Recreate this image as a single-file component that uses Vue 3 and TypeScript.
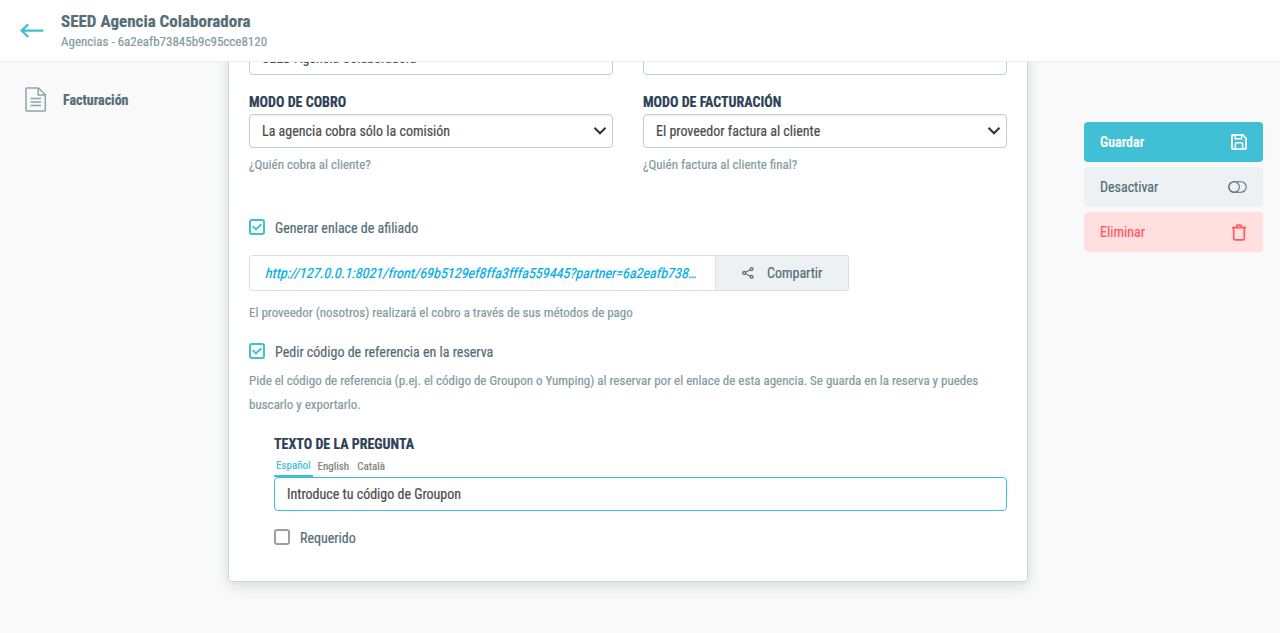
<script setup lang="ts">
import { ref } from 'vue'

interface SelectField {
  label: string
  value: string
  hint: string
}

const agencyName = 'SEED Agencia Colaboradora'
const selects: SelectField[] = [
  { label: 'MODO DE COBRO', value: 'La agencia cobra sólo la comisión', hint: '¿Quién cobra al cliente?' },
  { label: 'MODO DE FACTURACIÓN', value: 'El proveedor factura al cliente', hint: '¿Quién factura al cliente final?' },
]
const languages = ['Español', 'English', 'Català']
const activeLanguage = ref('Español')
const affiliate = ref(true)
const askCode = ref(true)
const required = ref(false)
</script>

<template>
  <div class="page">
    <header class="header">
      <svg class="back" width="26" height="18" viewBox="0 0 26 18">
        <path d="M24.5 8.6H2.4M9.2 2.4 2.6 8.6l6.6 6.4" fill="none" stroke="#41bfd4" stroke-width="2.2" />
      </svg>
      <div class="heading">
        <h1><span>{{ agencyName }}</span></h1>
        <p><span>Agencias - 6a2eafb73845b9c95cce8120</span></p>
      </div>
    </header>

    <main class="body">
      <nav class="sidebar">
        <a class="nav-item">
          <svg width="22" height="26" viewBox="0 0 22 26" fill="none" stroke="#8ba6aa" stroke-width="1.5">
            <path d="M1.8 1H13.5L20.3 7.8V23.2Q20.3 24 19.5 24H1.8Q1 24 1 23.2V1.8Q1 1 1.8 1Z" />
            <path d="M13.2 1V8H20.3M5.5 11.6H16M5.5 15.1H16M5.5 18.6H16" />
          </svg>
          <span>Facturación</span>
        </a>
      </nav>

      <section class="card">
        <div class="row first">
          <div class="control"><span>{{ agencyName }}</span></div>
          <div class="control"></div>
        </div>
        <div class="row">
          <div v-for="field in selects" :key="field.label" class="field">
            <div class="label"><span>{{ field.label }}</span></div>
            <div class="control select">
              <span>{{ field.value }}</span>
              <svg width="14" height="10" viewBox="0 0 14 10">
                <path d="M1.5 1.8 7 7.3l5.5-5.5" fill="none" stroke="#333" stroke-width="2" />
              </svg>
            </div>
            <div class="hint"><span>{{ field.hint }}</span></div>
          </div>
        </div>

        <div class="check-row affiliate" @click="affiliate = !affiliate">
          <i class="box" :class="{ on: affiliate }">
            <svg v-if="affiliate" width="12" height="12" viewBox="0 0 12 12"><path d="M1.7 5.1 5 8.4 10.3 3.2" /></svg>
          </i>
          <span>Generar enlace de afiliado</span>
        </div>

        <div class="link-box">
          <a class="url"><span>http://127.0.0.1:8021/front/69b5129ef8ffa3fffa559445?partner=6a2eafb738…</span></a>
          <button class="share">
            <svg width="12" height="12" viewBox="0 0 12 12" fill="none" stroke="#5b757c" stroke-width="1.3">
              <circle cx="2.2" cy="6" r="1.5" /><circle cx="9.6" cy="2.1" r="1.4" /><circle cx="9.6" cy="9.9" r="1.4" />
              <path d="M3.6 5.3 8.3 2.8M3.6 6.7 8.3 9.2" />
            </svg>
            <span>Compartir</span>
          </button>
        </div>
        <div class="note"><span>El proveedor (nosotros) realizará el cobro a través de sus métodos de pago</span></div>

        <div class="check-row code" @click="askCode = !askCode">
          <i class="box" :class="{ on: askCode }">
            <svg v-if="askCode" width="12" height="12" viewBox="0 0 12 12"><path d="M1.7 5.1 5 8.4 10.3 3.2" /></svg>
          </i>
          <span>Pedir código de referencia en la reserva</span>
        </div>
        <p class="description">
          <span>Pide el código de referencia (p.ej. el código de Groupon o Yumping) al reservar por el enlace de esta agencia. Se guarda en la reserva y puedes</span><br />
          <span>buscarlo y exportarlo.</span>
        </p>

        <div class="question">
          <div class="label"><span>TEXTO DE LA PREGUNTA</span></div>
          <div class="tabs">
            <a
              v-for="lang in languages"
              :key="lang"
              :class="{ active: lang === activeLanguage }"
              @click="activeLanguage = lang"
            ><span>{{ lang }}</span></a>
          </div>
          <div class="control focused"><span>Introduce tu código de Groupon</span></div>
          <div class="check-row required" @click="required = !required">
            <i class="box" :class="{ on: required }">
              <svg v-if="required" width="12" height="12" viewBox="0 0 12 12"><path d="M1.7 5.1 5 8.4 10.3 3.2" /></svg>
            </i>
            <span>Requerido</span>
          </div>
        </div>
      </section>

      <aside class="actions">
        <button class="save">
          <span>Guardar</span>
          <svg width="16" height="16" viewBox="0 0 16 16" fill="none" stroke="#fff" stroke-width="1.8">
            <path d="M1.9.9H11.6L15.1 4.4V14.1Q15.1 15.1 14.1 15.1H1.9Q.9 15.1.9 14.1V1.9Q.9.9 1.9.9Z" />
            <path d="M4.2 1V4.7H10.6V1M4.4 15V9.6Q4.4 8.8 5.2 8.8H10.8Q11.6 8.8 11.6 9.6V15" stroke-width="1.5" />
          </svg>
        </button>
        <button class="disable">
          <span>Desactivar</span>
          <svg width="19" height="12" viewBox="0 0 19 12" fill="none" stroke="#5b757c" stroke-width="1.1">
            <rect x=".8" y=".7" width="17.4" height="10.6" rx="5.3" /><circle cx="6.1" cy="6" r="5.3" />
          </svg>
        </button>
        <button class="remove">
          <span>Eliminar</span>
          <svg width="16" height="17" viewBox="0 0 16 17" fill="none" stroke="#ff5a5f" stroke-width="1.7">
            <path d="M1 3.7H15M2.7 3.7V14.4Q2.7 15.9 4.2 15.9H11.8Q13.3 15.9 13.3 14.4V3.7M5.5 3.5V2.3Q5.5 1.1 6.7 1.1H9.3Q10.5 1.1 10.5 2.3V3.5" />
          </svg>
        </button>
      </aside>
    </main>
  </div>
</template>

<style>
body { background: #f9f9f9; overflow: hidden; }
</style>

<style scoped>
* { box-sizing: border-box; }
.page {
  width: 1280px; height: 633px; overflow: hidden; background: #f9f9f9; color: #546e76;
  font-family: "Roboto Condensed", Roboto, sans-serif; font-stretch: 75%; font-size: 14px;
  -webkit-text-stroke: .2px;
}
h1, p { margin: 0; }
span { white-space: nowrap; }
svg { display: block; flex: none; }
.header { height: 62px; background: #fff; border-bottom: 1px solid #eceff1; display: flex; padding-left: 19px; }
.back { margin-top: 22px; }
.heading { margin: 11px 0 0 16px; }
h1 { font-size: 17px; line-height: 20px; font-weight: 700; color: #546e76; }
.heading p { font-size: 13px; line-height: 22px; color: #839ba1; }
.body { height: 571px; overflow: hidden; display: flex; }
.sidebar { width: 228px; flex: none; padding: 25px 0 0 25px; }
.nav-item { display: flex; align-items: center; height: 26px; gap: 16px; font-weight: 700; }
.card {
  width: 800px; flex: none; height: 562px; margin-top: -42px; padding: 20px 20px 0; background: #fff;
  border: 1px solid #ccd7df; border-radius: 4px; box-shadow: 0 3px 14px rgba(60, 95, 105, .2);
}
.row { display: grid; grid-template-columns: 364px 364px; gap: 30px; }
.control {
  height: 34px; border: 1px solid #c1ccd6; border-radius: 4px; padding: 0 12px; background: #fff;
  display: flex; align-items: center; justify-content: space-between; color: #4d4d4d; font-size: 14px;
}
.select { box-shadow: inset 0 1px 1px rgba(0, 0, 0, .06); padding-right: 5px; }
.select svg { margin-top: -1px; }
.label { height: 24px; line-height: 24px; color: #2d4157; font-weight: 700; }
.first + .row { margin-top: 15px; }
.hint { height: 20px; line-height: 20px; margin-top: 7px; font-size: 13px; color: #839ba1; }
.check-row { display: flex; align-items: center; height: 18px; gap: 10px; }
.check-row > span { padding-top: 2px; }
.box { width: 16px; height: 16px; border: 2px solid #9e9e9e; border-radius: 3px; flex: none; }
.box.on { border-color: #41bfd4; }
.box path { fill: none; stroke: #41bfd4; stroke-width: 2; }
.affiliate { margin-top: 43px; }
.link-box { width: 600px; height: 36px; margin-top: 19px; border: 1px solid #ddd; border-radius: 3px; display: flex; overflow: hidden; }
.url { width: 465px; padding-left: 16px; line-height: 34px; color: #00ade6; }
.url span { display: inline-block; transform: skewX(-14deg); }
.share { flex: 1; border: 0; border-left: 1px solid #ddd; background: #edf1f4; font: inherit; color: #546e76; padding: 0 0 0 26px; display: flex; align-items: center; gap: 13px; }
.note { margin-top: 12px; height: 20px; line-height: 20px; font-size: 13px; color: #839ba1; }
.code { margin-top: 19px; }
.description { margin-top: 9px; font-size: 13px; line-height: 24px; color: #839ba1; }
.question { margin: 15px 0 0 25px; }
.tabs { height: 21px; display: flex; font-size: 11px; line-height: 22px; color: #808080; }
.tabs a { padding: 0 3px 0 5px; }
.tabs .active { color: #41bfd4; padding: 0 2px; border-bottom: 2px solid #41bfd4; line-height: 20px; }
.control.focused { border-color: #41bfd4; }
.required { margin-top: 17px; }
.actions { margin: 60px 0 0 56px; width: 179px; display: flex; flex-direction: column; gap: 5px; }
.actions button { height: 40px; flex: none; border: 0; border-radius: 4px; padding: 0 16px; font: inherit; display: flex; align-items: center; justify-content: space-between; }
.save { background: #41bfd4; color: #fff; }
.actions .save { font-weight: 500; }
.disable { background: #edf1f4; color: #546e76; }
.remove { background: #ffdfdf; color: #ff5a5f; }
</style>
